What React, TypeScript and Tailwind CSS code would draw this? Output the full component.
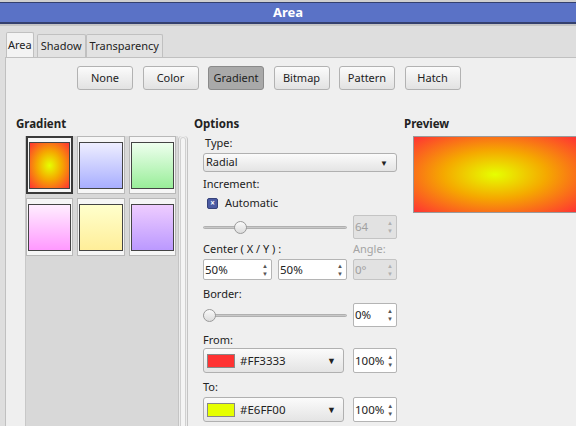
import React from 'react'

const font = { fontFamily: '"Noto Sans", "Open Sans", sans-serif' }

const Spin = ({ value, disabled, w = 'w-[44px]', h = 'h-[24px]' }: { value: string; disabled?: boolean; w?: string; h?: string }) => (
    <div className={`${w} ${h} flex border rounded-[2px] ${disabled ? 'bg-[#e2e2e2] border-[#c4c4c4] text-[#a0a0a0]' : 'bg-white border-[#b4b4b4] text-[#222]'}`}>
        <div className="flex-1 flex items-center pl-[1px] text-[11.5px] leading-none">{value}</div>
        <div className={`w-[12px] flex flex-col items-center justify-center text-[6px] leading-[8px] ${disabled ? 'text-[#b0b0b0]' : 'text-[#555]'}`}>
            <span>▲</span>
            <span>▼</span>
        </div>
    </div>
)

const Slider = ({ pos }: { pos: number }) => (
    <div className="relative w-[144px] h-[24px] flex items-center">
        <div className="w-full h-[3px] rounded-full bg-[#c8c8c8] border border-[#b0b0b0]" />
        <div
            className="absolute top-[6px] w-[13px] h-[13px] rounded-full border border-[#9a9a9a] bg-gradient-to-b from-[#fafafa] to-[#dcdcdc]"
            style={{ left: pos }}
        />
    </div>
)

const ColorDrop = ({ color, label }: { color: string; label: string }) => (
    <div className="w-[141px] h-[25px] flex items-center border border-[#b0b0b0] rounded-[3px] bg-gradient-to-b from-[#fbfbfb] to-[#e4e4e4] pl-[3px] pr-[7px]">
        <div className="w-[28px] h-[14px] border border-[#888]" style={{ backgroundColor: color }} />
        <span className="ml-[5px] flex-1 text-[11.5px] text-[#222]">{label}</span>
        <span className="text-[9px] text-[#222]">▼</span>
    </div>
)

const tiles = [
    'radial',
    'linear-gradient(to bottom, #eeeeff, #a8aeff)',
    'linear-gradient(to bottom, #eeffee, #99ee99)',
    'linear-gradient(to bottom, #ffeeff, #ff99ff)',
    'linear-gradient(to bottom, #ffffcc, #ffee99)',
    'linear-gradient(to bottom, #eeccff, #bb99ff)',
]

const radial = 'radial-gradient(ellipse at center, #e6ff00 0%, #f5a800 45%, #ff3333 100%)'

const App = () => {
    const buttons = ['None', 'Color', 'Gradient', 'Bitmap', 'Pattern', 'Hatch']

    return (
        <div className="w-[576px] h-[426px] overflow-hidden bg-[#dedede] flex flex-col text-[11px] text-[#222]" style={font}>
            {/* title bar */}
            <div className="shrink-0 h-[2px] bg-[#cfcfcf]" />
            <div className="shrink-0 h-[22px] bg-[#5a72c6] border-t border-b-2 border-[#34406e] flex items-center justify-center">
                <span className="text-white font-bold text-[13px]">Area</span>
            </div>
            <div className="shrink-0 h-[2px] bg-[#c4c4c4]" />

            {/* tabs */}
            <div className="shrink-0 flex items-end pl-[6px] h-[31px]">
                <div className="h-[25px] px-[1px] flex items-center bg-[#f3f3f3] border border-b-0 border-[#c0c0c0] rounded-t-[2px]">Area</div>
                <div className="ml-[3px] h-[23px] px-[3px] flex items-center bg-[#e2e2e2] border border-b-0 border-[#c0c0c0] rounded-t-[2px]">Shadow</div>
                <div className="h-[23px] px-[3px] flex items-center bg-[#e2e2e2] border border-b-0 border-[#c0c0c0] rounded-t-[2px]">Transparency</div>
            </div>

            {/* panel */}
            <div className="flex-1 ml-[5px] border-l border-t border-[#c0c0c0] bg-[#efefef] flex flex-col">
                <div className="shrink-0 flex pl-[71px] pt-[8px] gap-[9.5px]">
                    {buttons.map((b) => (
                        <div
                            key={b}
                            className={`w-[56px] h-[24px] flex items-center justify-center rounded-[3px] border ${
                                b === 'Gradient'
                                    ? 'bg-[#a9a9a9] border-[#8a8a8a] text-[#222]'
                                    : 'bg-gradient-to-b from-[#fbfbfb] to-[#e2e2e2] border-[#b2b2b2]'
                            }`}
                        >
                            {b}
                        </div>
                    ))}
                </div>

                <div className="shrink-0 flex pt-[23px]">
                    {/* gradient list */}
                    <div className="ml-[10px] w-[172px] flex flex-col">
                        <div className="h-[22px] flex items-center font-bold text-[11.5px]">Gradient</div>
                        <div className="flex ml-[9px] mt-[1px] h-[400px]">
                            <div className="w-[153px] bg-[#d8d8d8] border-l border-[#c8c8c8]">
                                <div className="grid grid-cols-3 gap-x-[4px] gap-y-[4px] w-[150px]">
                                    {tiles.map((t, i) => (
                                        <div
                                            key={i}
                                            className={`h-[58px] bg-[#f6f6f6] flex flex-col justify-center ${
                                                i === 0 ? 'border-2 border-[#3a3a3a] px-[1px]' : 'border border-[#b8b8b8] px-[1px]'
                                            }`}
                                        >
                                            <div
                                                className="h-[47px] border border-[#444]"
                                                style={{ background: t === 'radial' ? radial : t }}
                                            />
                                        </div>
                                    ))}
                                </div>
                            </div>
                            <div className="w-[10px] border-x border-[#c4c4c4] bg-[#ededed] rounded-t-[4px]">
                                <div className="mx-[1px] mt-[1px] h-full rounded-t-[3px] bg-[#f4f4f4] border border-[#d0d0d0]" />
                            </div>
                        </div>
                    </div>

                    {/* options */}
                    <div className="ml-[6px] w-[204px] flex flex-col">
                        <div className="h-[22px] flex items-center font-bold text-[11.5px]">Options</div>
                        <div className="pl-[9px] flex flex-col">
                            <div className="h-[14px] flex items-center pl-[2px] mt-[1px]">Type:</div>
                            <div className="mt-[3px] w-[194px] h-[19px] flex items-center border border-[#b0b0b0] rounded-[3px] bg-gradient-to-b from-[#fbfbfb] to-[#e4e4e4] pl-[2px] pr-[8px]">
                                <span className="flex-1">Radial</span>
                                <span className="text-[8px]">▼</span>
                            </div>
                            <div className="mt-[5px] h-[14px] flex items-center">Increment:</div>
                            <div className="mt-[5px] h-[14px] flex items-center pl-[4px]">
                                <div className="w-[11px] h-[11px] rounded-[2px] bg-[#4b5ba3] border border-[#36427a] flex items-center justify-center text-white text-[8px] leading-none font-bold">×</div>
                                <span className="ml-[7px]">Automatic</span>
                            </div>
                            <div className="mt-[5px] flex items-center justify-between w-[194px]">
                                <Slider pos={31} />
                                <Spin value="64" disabled />
                            </div>
                            <div className="mt-[3px] h-[14px] flex items-center justify-between w-[194px]">
                                <span>Center ( X / Y ) :</span>
                                <span className="w-[44px] text-[#a4a4a4]">Angle:</span>
                            </div>
                            <div className="mt-[3px] flex items-center gap-[6px] w-[194px]">
                                <Spin value="50%" w="w-[69px]" h="h-[21px]" />
                                <Spin value="50%" w="w-[69px]" h="h-[21px]" />
                                <Spin value="0°" disabled h="h-[21px]" />
                            </div>
                            <div className="mt-[7px] h-[14px] flex items-center">Border:</div>
                            <div className="mt-[2px] flex items-center justify-between w-[194px]">
                                <Slider pos={0} />
                                <Spin value="0%" />
                            </div>
                            <div className="mt-[6px] h-[14px] flex items-center">From:</div>
                            <div className="mt-[1px] flex items-center justify-between w-[194px]">
                                <ColorDrop color="#ff3333" label="#FF3333" />
                                <Spin value="100%" h="h-[25px]" />
                            </div>
                            <div className="mt-[7px] h-[14px] flex items-center">To:</div>
                            <div className="mt-[3px] flex items-center justify-between w-[194px]">
                                <ColorDrop color="#e6ff00" label="#E6FF00" />
                                <Spin value="100%" h="h-[25px]" />
                            </div>
                        </div>
                    </div>

                    {/* preview */}
                    <div className="ml-[6px] flex-1 flex flex-col">
                        <div className="h-[22px] flex items-center font-bold text-[11.5px]">Preview</div>
                        <div className="ml-[9px] mt-[1px] h-[77px] border border-[#9a9a9a] border-r-0" style={{ background: radial }} />
                    </div>
                </div>
            </div>
        </div>
    )
}

export default App
